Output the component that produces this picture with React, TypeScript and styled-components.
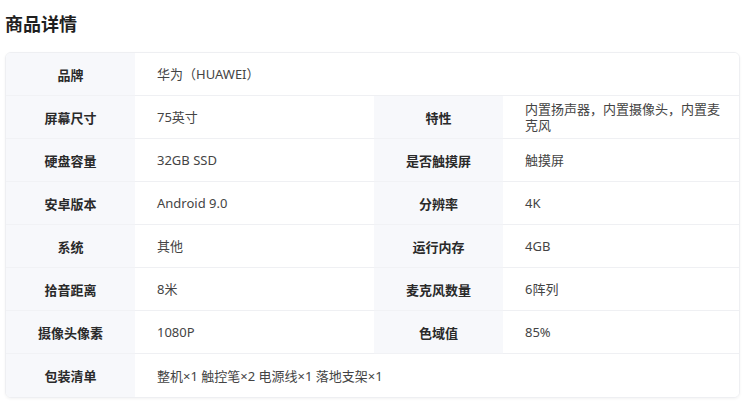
import { Fragment } from "react";
import styled, { createGlobalStyle } from "styled-components";

type Spec = { label: string; value: string };
type Row = Spec[];

const GlobalStyle = createGlobalStyle`
  html, body {
    margin: 0;
    padding: 0;
    background: #ffffff;
  }
  body {
    font-family: "Noto Sans", "Noto Sans CJK SC", sans-serif;
    color: #333;
  }
`;

const Page = styled.div`
  width: 750px;
  padding: 10px 10px 8px 5px;
  box-sizing: border-box;
`;

const Title = styled.h2`
  margin: 0 0 16px;
  font-family: "Noto Sans CJK SC", sans-serif;
  font-size: 18px;
  line-height: 26px;
  font-weight: 700;
  color: #1f1f1f;
`;

const Table = styled.div`
  display: grid;
  grid-template-columns: 129px 239px 129px 1fr;
  grid-auto-rows: 43px;
  border: 1px solid #eeeff2;
  border-radius: 6px;
  overflow: hidden;
  box-shadow: 0 1px 3px rgba(0, 0, 0, 0.05);
`;

const Label = styled.div<{ $last?: boolean }>`
  display: flex;
  align-items: center;
  justify-content: center;
  background: #f7f8fb;
  border-bottom: ${(p) => (p.$last ? "none" : "1px solid #f1f2f5")};
  font-family: "Noto Sans CJK SC", sans-serif;
  font-size: 13px;
  font-weight: 700;
  color: #2a2a2a;
`;

const Value = styled.div<{ $span?: boolean; $last?: boolean }>`
  display: flex;
  align-items: center;
  grid-column: ${(p) => (p.$span ? "span 3" : "auto")};
  padding: 0 16px 0 22px;
  background: #ffffff;
  border-bottom: ${(p) => (p.$last ? "none" : "1px solid #eff0f3")};
  font-size: 13px;
  line-height: 16px;
  color: #444;
`;

const rows: Row[] = [
  [{ label: "品牌", value: "华为（HUAWEI）" }],
  [
    { label: "屏幕尺寸", value: "75英寸" },
    { label: "特性", value: "内置扬声器，内置摄像头，内置麦克风" },
  ],
  [
    { label: "硬盘容量", value: "32GB SSD" },
    { label: "是否触摸屏", value: "触摸屏" },
  ],
  [
    { label: "安卓版本", value: "Android 9.0" },
    { label: "分辨率", value: "4K" },
  ],
  [
    { label: "系统", value: "其他" },
    { label: "运行内存", value: "4GB" },
  ],
  [
    { label: "拾音距离", value: "8米" },
    { label: "麦克风数量", value: "6阵列" },
  ],
  [
    { label: "摄像头像素", value: "1080P" },
    { label: "色域值", value: "85%" },
  ],
  [{ label: "包装清单", value: "整机×1 触控笔×2 电源线×1 落地支架×1" }],
];

export default function App() {
  return (
    <Page>
      <GlobalStyle />
      <Title>商品详情</Title>
      <Table>
        {rows.map((row, i) => {
          const last = i === rows.length - 1;
          return row.map((spec) => (
            <Fragment key={spec.label}>
              <Label $last={last}>{spec.label}</Label>
              <Value $span={row.length === 1} $last={last}>
                {spec.value}
              </Value>
            </Fragment>
          ));
        })}
      </Table>
    </Page>
  );
}
